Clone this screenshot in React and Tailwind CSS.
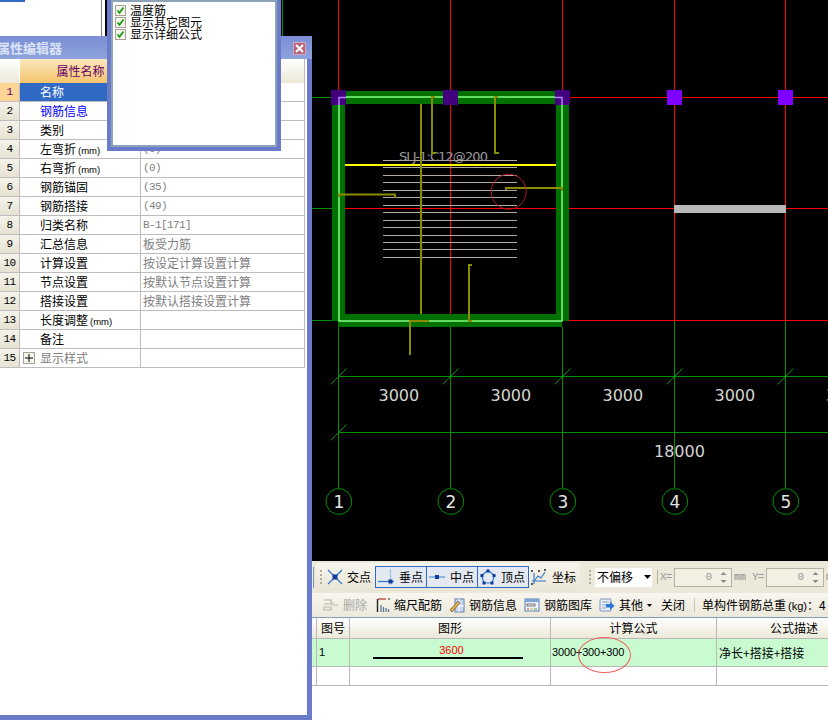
import React from "react";

const CJK = "font-['Noto_Sans_CJK_SC','Liberation_Sans',sans-serif]";
const MONO = "font-['Liberation_Mono','Noto_Sans_CJK_SC',monospace]";

const rows = [
  { name: "名称", active: true },
  { name: "钢筋信息", blue: true },
  { name: "类别" },
  { name: "左弯折", unit: true, value: "(0)" },
  { name: "右弯折", unit: true, value: "(0)" },
  { name: "钢筋锚固", value: "(35)" },
  { name: "钢筋搭接", value: "(49)" },
  { name: "归类名称", value: "B-1[171]" },
  { name: "汇总信息", value: "板受力筋" },
  { name: "计算设置", value: "按设定计算设置计算" },
  { name: "节点设置", value: "按默认节点设置计算" },
  { name: "搭接设置", value: "按默认搭接设置计算" },
  { name: "长度调整", unit: true },
  { name: "备注" },
  { name: "显示样式", plus: true },
];

const GRID_X = [338.5, 450.5, 562.5, 674.5, 785.5];
const BARS_Y = [160.5, 167.5, 175.5, 182.5, 190.5, 197.5, 205.5, 212.5, 220.5, 227.5, 235.5, 242.5, 249.5, 257.5];

function dodecagon(cx, cy, r) {
  const pts = [];
  for (let i = 0; i < 12; i++) {
    const a = (Math.PI / 6) * i + Math.PI / 12;
    pts.push(`${(cx + r * Math.cos(a)).toFixed(1)},${(cy + r * Math.sin(a)).toFixed(1)}`);
  }
  return pts.join(" ");
}

function CadDrawing() {
  const red = "#ff0000";
  const green = "#008f00";
  const olive = "#8c8c00";
  return (
    <svg width="828" height="561" viewBox="0 0 828 561" className="block">
      {/* axis lines */}
      <g stroke={red} strokeWidth="1">
        <path d="M338.5 0V97M450.5 0V321M562.5 0V97M674.5 0V321M785.5 0V321" />
        <path d="M568 97.5H828M345 208.5H828M568 320.5H828" />
      </g>
      <g stroke={green} strokeWidth="1" fill="none">
        <path d="M282.5 0V36M312 97.5H332M312 208.5H332M312 320.5H332" />
        {GRID_X.map((x) => (
          <path key={x} d={`M${x} ${x === 674.5 || x === 785.5 ? 321 : 327}V488`} />
        ))}
        <path d="M338 376.5H828M338 432.5H828" />
        {GRID_X.map((x) => (
          <path key={x} d={`M${x - 8} 384.5L${x + 8} 368.5`} />
        ))}
        <path d="M330.5 440.5L346.5 424.5" />
        {GRID_X.map((x) => (
          <polygon key={x} points={dodecagon(x + 0.3, 501.5, 13)} />
        ))}
      </g>

      {/* beams */}
      <g fill="#007000">
        <rect x="332" y="91" width="13" height="230" />
        <rect x="556" y="91" width="13" height="230" />
        <rect x="338" y="91" width="224" height="13" />
        <rect x="338" y="314" width="224" height="13" />
      </g>
      <rect x="339" y="97" width="223" height="224" fill="none" stroke="#80ff80" strokeWidth="1.5" />
      <rect x="674" y="205" width="112" height="8" fill="#b8b8b8" />

      {/* slab bars */}
      <g stroke="#b5a89f" strokeWidth="1">
        {BARS_Y.map((y) => (
          <path key={y} d={`M383 ${y}H517`} />
        ))}
      </g>
      <text x="399" y="161" fill="#9a9a9a" fontSize="13" fontFamily="DejaVu Sans" textLength="89">
        SLJ-1:C12@200
      </text>
      <path d="M345 165H556" stroke="#ffff00" strokeWidth="2" />
      <g stroke={olive} strokeWidth="2" fill="none">
        <path d="M421 104V314" />
        <path d="M435 97H432V153H436" />
        <path d="M498 97H495V153H499" />
        <path d="M339 197V194.5H395V198" />
        <path d="M506 190V188H562V191" />
        <path d="M472 265H469V321H472" />
        <path d="M429 321H410V355" />
      </g>
      <circle cx="508.7" cy="191.7" r="17.5" fill="none" stroke="#b01c2c" strokeWidth="1" />

      {/* column markers */}
      <g fill="#42007e">
        <rect x="331" y="90" width="15" height="15" />
        <rect x="443" y="90" width="15" height="15" />
        <rect x="555" y="90" width="15" height="15" />
      </g>
      <path d="M339 105V97.5H346M562 105V97.5H555" stroke="#b080ff" strokeWidth="1.5" fill="none" />
      <g fill="#7f00ff">
        <rect x="667" y="90" width="15" height="15" />
        <rect x="778" y="90" width="15" height="15" />
      </g>

      {/* dimensions */}
      <g fill="#d4d4d4" fontFamily="DejaVu Sans" fontSize="16">
        <text x="378.5" y="401">3000</text>
        <text x="490.5" y="401">3000</text>
        <text x="602.5" y="401">3000</text>
        <text x="714.5" y="401">3000</text>
        <text x="826" y="401">3000</text>
        <text x="654" y="457">18000</text>
      </g>
      <g fill="#e4e4e4" fontFamily="DejaVu Sans" fontSize="17" textAnchor="middle">
        {GRID_X.map((x, i) => (
          <text key={x} x={x + 0.5} y="507.5">{i + 1}</text>
        ))}
      </g>
    </svg>
  );
}

function CheckRow({ label }) {
  return (
    <div className="flex items-center h-[12px]">
      <span className="flex items-center justify-center w-[11px] h-[11px] border border-[#a5a294] bg-[#f4f3ec] shrink-0">
        <svg width="9" height="9" viewBox="0 0 9 9">
          <path d="M1.5 4.5L3.5 6.8L7.5 1.5" stroke="#12a012" strokeWidth="1.8" fill="none" />
        </svg>
      </span>
      <span className="ml-[4px] -mt-[1px] text-[12px] leading-[12px] text-black">{label}</span>
    </div>
  );
}

function PropertyPanel() {
  return (
    <div className={`absolute left-0 top-[36px] w-[312px] h-[684px] flex flex-col bg-[#6a7bcc] pr-[5px] pb-[5px] ${CJK}`}>
      <div className="flex items-center h-[23px] shrink-0 bg-gradient-to-b from-[#7b8dd6] to-[#8ea4dc] -mr-[5px]">
        <span className="-ml-[3px] text-[13px] font-bold text-[#dbe4f6] whitespace-nowrap">属性编辑器</span>
        <span className="ml-auto mr-[6px] mt-[2px] flex items-center justify-center w-[13px] h-[13px] bg-[#b9647f] border border-[#d5a5bb]">
          <svg width="9" height="9" viewBox="0 0 9 9">
            <path d="M1 1L8 8M8 1L1 8" stroke="#fff" strokeWidth="2" />
          </svg>
        </span>
      </div>
      <div className="flex-1 bg-white">
        <div className="w-[305px] border-r border-[#b8b8b8]">
          <div className="flex h-[24px]">
            <div className="w-[20px] border-r border-[#ffffff] bg-gradient-to-b from-[#ffffff] to-[#ece9d8]" />
            <div className="w-[121px] flex items-center justify-center text-[12px] text-[#660066] bg-gradient-to-b from-[#fbe8bc] to-[#f4c46c]">
              属性名称
            </div>
            <div className="flex-1 bg-gradient-to-b from-[#ffffff] to-[#ece9d8]" />
          </div>
          {rows.map((r, i) => (
            <div key={r.name} className="flex h-[19px] border-b border-[#bdbdbd] text-[12px] leading-[18px]">
              <div
                className={`w-[20px] border-r border-[#bdbdbd] text-center ${MONO} text-[11px] tracking-[-0.6px] ${
                  r.active ? "bg-[#fcd595] text-[#660066]" : "bg-gradient-to-b from-[#f5f3ea] to-[#e6e3d3] text-black"
                }`}
              >
                {i + 1}
              </div>
              <div
                className={`relative w-[121px] border-r border-[#bdbdbd] pl-[20px] whitespace-nowrap ${
                  r.active ? "bg-[#316ac5] text-white" : r.blue ? "text-[#0000ff]" : r.plus ? "text-[#808080]" : "text-black"
                }`}
              >
                {r.plus && (
                  <span className="absolute left-[3px] top-[3px] flex items-center justify-center w-[12px] h-[12px] border border-[#a5a294] bg-[#f4f3ec] text-black">
                    <svg width="8" height="8" viewBox="0 0 8 8">
                      <path d="M0 4H8M4 0V8" stroke="#000" strokeWidth="1" />
                    </svg>
                  </span>
                )}
                {r.name}
                {r.unit && <span className="ml-[2px] text-[9.5px] font-['Liberation_Sans',sans-serif]">(mm)</span>}
              </div>
              <div
                className={`flex-1 pl-[2px] text-[#808080] whitespace-nowrap ${
                  r.value && r.value[0] < "\u0080" ? `${MONO} text-[11px] tracking-[-0.6px]` : ""
                }`}
              >
                {r.value}
              </div>
            </div>
          ))}
        </div>
      </div>
    </div>
  );
}

function SnapIcon({ kind }) {
  const blue = "#2f74c8";
  const dark = "#123c9c";
  return (
    <svg width="16" height="16" viewBox="0 0 16 16" className="shrink-0">
      {kind === "cross" && (
        <g>
          <path d="M1 1L15 15M15 1L1 15" stroke={blue} strokeWidth="1.2" />
          <rect x="5.5" y="5.5" width="5" height="5" fill={dark} />
        </g>
      )}
      {kind === "perp" && (
        <g>
          <path d="M0 12.5H16" stroke={blue} strokeWidth="1.2" />
          <path d="M12.5 0V16" stroke="#9cc0e8" strokeWidth="1.2" />
          <rect x="10.5" y="10.5" width="4" height="4" fill={dark} />
        </g>
      )}
      {kind === "mid" && (
        <g>
          <path d="M0 8H16" stroke="#7aa6dc" strokeWidth="1.6" />
          <rect x="6" y="6" width="4" height="4" fill={dark} />
        </g>
      )}
      {kind === "vertex" && (
        <g>
          <polygon points="8,1.5 14.5,6.5 12,14 4,14 1.5,6.5" fill="none" stroke={blue} strokeWidth="1.2" />
          <g fill={dark}>
            <rect x="6.5" y="0.5" width="3" height="3" />
            <rect x="0.5" y="5" width="3" height="3" />
            <rect x="12.5" y="5" width="3" height="3" />
            <rect x="2.5" y="12.5" width="3" height="3" />
            <rect x="10.5" y="12.5" width="3" height="3" />
          </g>
        </g>
      )}
      {kind === "coord" && (
        <g>
          <path d="M3 15V4M1 12H15" stroke={blue} strokeWidth="1.1" />
          <path d="M3 12L7 7L10 9L14 3" stroke={blue} strokeWidth="1.1" fill="none" />
          <path d="M0 1L2 3M2 1L0 3M7 1L9 3M9 1L7 3M13 0L15 2M15 0L13 2M0 14L2 16M2 14L0 16" stroke="#333" strokeWidth="0.8" />
        </g>
      )}
    </svg>
  );
}

function ToolIcon({ kind }) {
  return (
    <svg width="16" height="16" viewBox="0 0 16 16" className="shrink-0">
      {kind === "scale" && (
        <g>
          <path d="M1.5 2V15" stroke="#222" strokeWidth="1.4" />
          <path d="M2 2H10" stroke="#b03020" strokeWidth="1.2" />
          <path d="M12 2H14" stroke="#222" strokeWidth="1.2" />
          <path d="M5 8V15M7.5 10V15M10 11V15M12.5 12V15" stroke="#5a6a90" strokeWidth="1.2" />
        </g>
      )}
      {kind === "info" && (
        <g>
          <rect x="6" y="2" width="9" height="13" fill="#c8d8f0" stroke="#6a80a8" />
          <path d="M6 9H15M10 2V15" stroke="#ffffff" />
          <path d="M1 13L9 4L11 6L3 15Z" fill="#e8b040" stroke="#555" strokeWidth="0.7" />
        </g>
      )}
      {kind === "lib" && (
        <g>
          <rect x="1" y="2" width="14" height="12" fill="#eef3fb" stroke="#5a80b8" />
          <rect x="1" y="2" width="14" height="3" fill="#7ea4d8" />
          <rect x="3" y="7" width="8" height="2" fill="none" stroke="#555" strokeWidth="0.8" />
          <path d="M3 12H5" stroke="#d84030" />
          <path d="M6 12H9" stroke="#e0b030" />
          <path d="M10 12H13" stroke="#40a040" />
        </g>
      )}
      {kind === "other" && (
        <g>
          <rect x="1" y="2" width="11" height="12" rx="1" fill="#e8eff9" stroke="#7a92b8" />
          <path d="M3 5H10M3 8H7M3 11H7" stroke="#8aa0c0" />
          <path d="M7 7H11V4.5L15.5 9L11 13V10.5H7Z" fill="#2f74d8" />
        </g>
      )}
    </svg>
  );
}

function SpinBox() {
  return (
    <div className="flex items-center justify-end w-[58px] h-[19px] border border-[#b5b2a0] bg-[#f2efe3] text-[11px] text-[#9a9a9a] font-['Liberation_Mono',monospace]">
      <span className="mr-[8px]">0</span>
      <svg width="7" height="15" viewBox="0 0 7 15" className="mr-[4px]">
        <path d="M3.5 2L6.5 5H0.5Z M3.5 13L6.5 10H0.5Z" fill="#8a8a8a" />
      </svg>
    </div>
  );
}

function Snap({ kind, label, boxed }) {
  return (
    <div
      className={`flex items-center h-[22px] w-[52px] pl-[2px] -mr-[1px] border ${
        boxed ? "border-[#316ac5] bg-[#e3e8f1]" : "border-transparent"
      }`}
    >
      <SnapIcon kind={kind} />
      <span className="ml-[5px] text-[12px]">{label}</span>
    </div>
  );
}

function BottomPanel() {
  return (
    <div className={`ml-[312px] flex-1 flex flex-col bg-white text-[12px] text-black ${CJK}`}>
      <div className="flex items-center h-[32px] shrink-0 bg-[#ece8da] whitespace-nowrap overflow-hidden *:shrink-0">
        <div className="w-[2px] h-[21px] bg-[#f4f1e6] border-r border-[#6f8fc8]" />
        <div className="ml-[2px] flex items-center h-[28px] w-[264px] rounded-[3px] bg-gradient-to-b from-[#f7f5ee] to-[#e9e5d6]">
          <div className="ml-[4px] w-[2px] h-[14px] border-l-2 border-dotted border-[#b0ad9c]" />
          <div className="ml-[5px]"><SnapIcon kind="cross" /></div>
          <span className="ml-[4px] w-[28px]">交点</span>
          <Snap kind="perp" label="垂点" boxed />
          <Snap kind="mid" label="中点" boxed />
          <Snap kind="vertex" label="顶点" boxed />
          <div className="ml-[3px]"><SnapIcon kind="coord" /></div>
          <span className="ml-[5px]">坐标</span>
        </div>
        <div className="ml-[9px] w-[2px] h-[14px] border-l-2 border-dotted border-[#b0ad9c]" />
        <div className="ml-[4px] flex items-center w-[57px] h-[19px] bg-white pl-[2px]">
          <span>不偏移</span>
          <svg width="7" height="4" viewBox="0 0 7 4" className="ml-[11px]">
            <path d="M0 0H7L3.5 4Z" fill="#000" />
          </svg>
        </div>
        <div className="ml-[5px] w-px h-[14px] bg-[#b0ad9c]" />
        <span className={`ml-[2px] w-[14px] ${MONO} text-[11px] tracking-[-0.8px] text-[#9a9a9a]`}>X=</span>
        <SpinBox />
        <span className={`ml-[2px] w-[18px] ${MONO} text-[10px] text-[#8a8a8a]`}>mm</span>
        <span className={`w-[14px] ${MONO} text-[11px] tracking-[-0.8px] text-[#9a9a9a]`}>Y=</span>
        <SpinBox />
        <span className={`ml-[2px] ${MONO} text-[10px] text-[#8a8a8a]`}>m</span>
      </div>

      <div className="flex items-center h-[25px] shrink-0 border-b border-[#7f9db9] bg-gradient-to-b from-[#f8f6ef] to-[#ece8da] whitespace-nowrap overflow-hidden *:shrink-0">
        <svg width="16" height="14" viewBox="0 0 16 14" className="ml-[11px]">
          <path d="M1 2H8V5H11M1 6H8M1 9H8V12H1ZM8 7H15" stroke="#b8b5a8" strokeWidth="1.2" fill="none" />
        </svg>
        <span className="ml-[4px] w-[33px] text-[#a8a8a8]">删除</span>
        <ToolIcon kind="scale" />
        <span className="ml-[2px] w-[55px]">缩尺配筋</span>
        <ToolIcon kind="info" />
        <span className="ml-[4px] w-[55px]">钢筋信息</span>
        <ToolIcon kind="lib" />
        <span className="ml-[4px] w-[55px]">钢筋图库</span>
        <ToolIcon kind="other" />
        <span className="ml-[4px]">其他</span>
        <svg width="5" height="3" viewBox="0 0 5 3" className="ml-[4px]">
          <path d="M0 0H5L2.5 3Z" fill="#000" />
        </svg>
        <span className="ml-[9px]">关闭</span>
        <div className="ml-[9px] w-px h-[14px] bg-[#c8c5b6]" />
        <span className="ml-[7px]">
          单构件钢筋总重<span className="ml-[2px] text-[11px] font-['Liberation_Sans',sans-serif]">(kg)</span>：4
        </span>
      </div>

      <div className="grid grid-cols-[5px_33px_201px_166px_1fr] h-[21px] shrink-0 border-b border-[#b8b8b8] bg-gradient-to-b from-[#ffffff] to-[#ece9d8] text-center leading-[20px]">
        <div className="border-r border-[#b8b8b8]" />
        <div className="border-r border-[#b8b8b8]">图号</div>
        <div className="border-r border-[#b8b8b8]">图形</div>
        <div className="border-r border-[#b8b8b8]">计算公式</div>
        <div className="pl-[53px] text-left">公式描述</div>
      </div>
      <div className="grid grid-cols-[5px_33px_201px_166px_1fr] h-[28px] shrink-0 border-b border-[#b8b8b8] bg-[#c8fcd0] leading-[27px]">
        <div className="border-r border-[#b8b8b8]" />
        <div className="border-r border-[#b8b8b8] pl-[2px] text-[11px] font-['Liberation_Sans',sans-serif]">1</div>
        <div className="flex flex-col items-center pt-[5px] border-r border-[#b8b8b8]">
          <span className="ml-[3px] text-[11px] leading-[13px] text-[#ff0000] font-['Liberation_Sans',sans-serif]">3600</span>
          <div className="w-[150px] h-[2px] mr-[4px] bg-black" />
        </div>
        <div className="relative border-r border-[#b8b8b8] pl-[1px] text-[11px] tracking-[-0.15px] font-['Liberation_Sans',sans-serif]">
          3000+300+300
          <span className="absolute left-[27px] top-[-2px] w-[53px] h-[36px] rounded-[50%] border border-[#f06060]" />
        </div>
        <div className="pl-[2px]">净长+搭接+搭接</div>
      </div>
      <div className="grid grid-cols-[5px_33px_201px_166px_1fr] h-[19px] shrink-0 border-b border-[#b8b8b8]">
        <div className="border-r border-[#b8b8b8]" />
        <div className="border-r border-[#b8b8b8]" />
        <div className="border-r border-[#b8b8b8]" />
        <div className="border-r border-[#b8b8b8]" />
        <div />
      </div>
    </div>
  );
}

export default function App() {
  return (
    <div className="relative flex flex-col w-[828px] h-[720px] overflow-hidden bg-black">
      <div className="h-[561px] shrink-0">
        <CadDrawing />
      </div>
      <BottomPanel />

      {/* window behind the property editor */}
      <div className="absolute left-0 top-0 w-[105px] h-[36px] bg-white">
        <div className="w-[25px] h-[2px] bg-[#316ac5]" />
        <div className="absolute right-[3px] top-0 w-px h-[36px] bg-[#808080]" />
      </div>
      <PropertyPanel />

      {/* rebar options popup */}
      <div className={`absolute left-[107px] top-0 w-[174px] h-[151px] bg-[#6a7bcc] px-[4px] pb-[4px] ${CJK}`}>
        <div className="h-full border-2 border-[#8fa3b8] bg-white pl-[2px] pt-[2px]">
          <CheckRow label="温度筋" />
          <CheckRow label="显示其它图元" />
          <CheckRow label="显示详细公式" />
        </div>
      </div>
    </div>
  );
}
